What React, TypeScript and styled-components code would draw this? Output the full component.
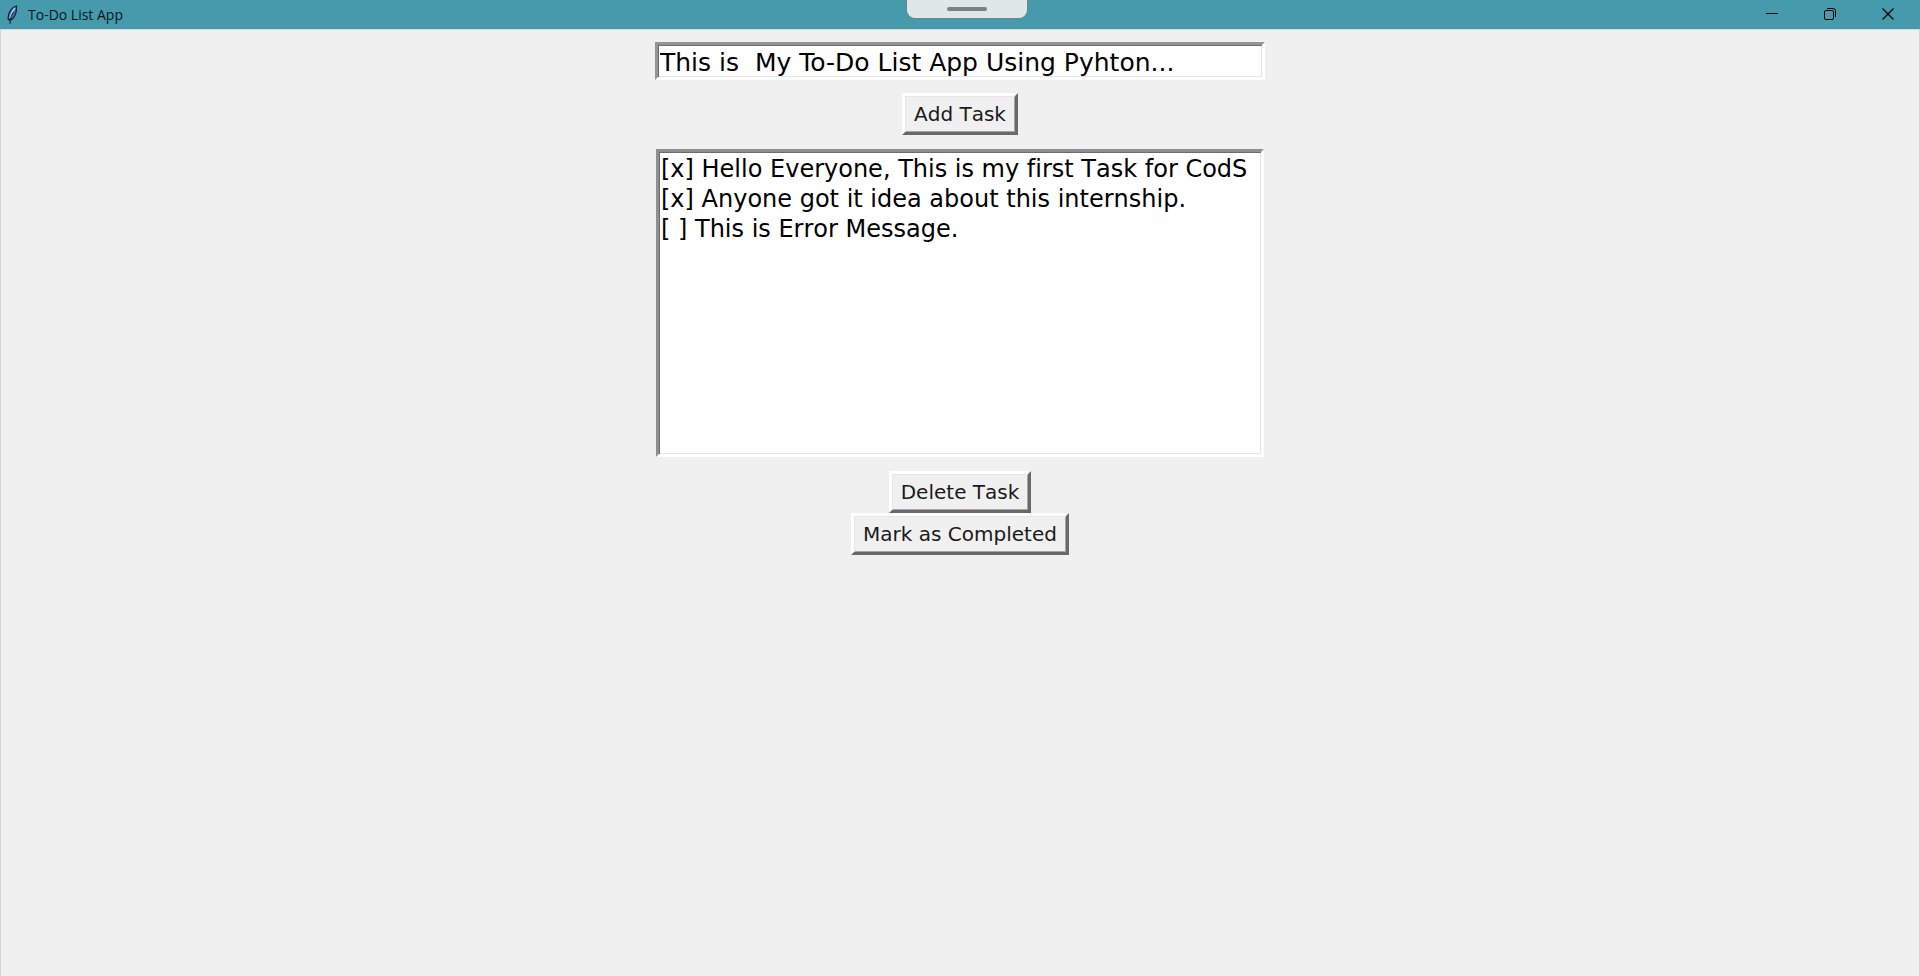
import React, { useState } from "react";
import styled, { createGlobalStyle } from "styled-components";

const GlobalStyle = createGlobalStyle`
  *, *::before, *::after { box-sizing: border-box; }
  body { margin: 0; background: #f0f0f0; }
`;

const appFont = `Verdana, "DejaVu Sans", sans-serif`;

const Window = styled.div`
  min-height: 100vh;
  display: flex;
  flex-direction: column;
  background: #f0f0f0;
  font-family: ${appFont};
`;

const TitleBar = styled.header`
  position: relative;
  height: 29px;
  display: flex;
  align-items: center;
  justify-content: space-between;
  background: #459aac;
`;

const TitleGroup = styled.div`
  display: flex;
  align-items: center;
  gap: 10px;
  padding-left: 6px;
`;

const Title = styled.h1`
  margin: 0;
  font: 400 14px/18px "Segoe UI", "Open Sans", sans-serif;
  color: #08161a;
`;

const WindowControls = styled.div`
  display: flex;
  height: 100%;
  padding-right: 3px;
`;

const ControlButton = styled.button`
  width: 58px;
  padding: 0 0 2px;
  border: 0;
  background: transparent;
  display: flex;
  align-items: center;
  justify-content: center;
`;

const PullTab = styled.div`
  position: absolute;
  top: 0;
  left: 50%;
  width: 122px;
  height: 19px;
  margin-left: -54px;
  border: 1px solid #6f8488;
  border-top: 0;
  border-radius: 0 0 9px 9px;
  background: #e0e7e9;
  display: flex;
  justify-content: center;
  padding-top: 7px;
`;

const Grip = styled.span`
  width: 40px;
  height: 4px;
  border-radius: 2px;
  background: #7b8080;
`;

const Content = styled.main`
  flex: 1;
  display: flex;
  flex-direction: column;
  align-items: center;
  padding: 12px 10px;
  border: 1px solid #d6d6d6;
  border-bottom: 0;
`;

const TaskInput = styled.input`
  width: 610px;
  max-width: 100%;
  height: 38px;
  padding: 2px 2px 0;
  border: 3px solid;
  border-color: #949494 #ffffff #ffffff #949494;
  border-radius: 0;
  outline: 0;
  background: #ffffff;
  box-shadow: inset 1px 1px #6c6c6c, inset -1px -1px #e6e6e6;
  font: 25px/30px ${appFont};
  color: #000000;
`;

const TaskList = styled.ul`
  width: 608px;
  max-width: 100%;
  height: 308px;
  margin: 14px 0;
  padding: 2px;
  border: 3px solid;
  border-color: #8f8f8f #ffffff #ffffff #8f8f8f;
  background: #ffffff;
  box-shadow: inset 1px 1px #6c6c6c, inset -1px -1px #e6e6e6;
  list-style: none;
  overflow: hidden;
`;

const TaskItem = styled.li`
  font-size: 24px;
  line-height: 30px;
  font-kerning: none;
  font-variant-ligatures: none;
  white-space: pre;
  overflow: hidden;
  color: #000000;
`;

const ActionButton = styled.button<{ $spaced?: boolean }>`
  height: 42px;
  margin-top: ${(p) => (p.$spaced ? "13px" : "0")};
  padding: 0 9px;
  border: 3px solid;
  border-color: #ffffff #696969 #696969 #ffffff;
  border-radius: 0;
  background: #f0f0f0;
  box-shadow: inset 1px 1px #e6e6e6, inset -1px -1px #a4a4a4;
  font: 20px/26px ${appFont};
  font-kerning: none;
  color: #1a1a1a;
`;

const FeatherIcon = () => (
  <svg width="12" height="20" viewBox="0 0 12 20" aria-hidden="true">
    <path d="M10.5 1C6 2 2 7 2 14l2 1.500c4-2 7-7 6.500-14.500z" fill="#3c70b4" stroke="#14202c" strokeWidth="1.200" />
    <path d="M9 3C6 6 5 9 4 13" fill="none" stroke="#b4d2ee" strokeWidth="1.500" />
    <path d="M7.500 7C5 11 4 14 4 19" fill="none" stroke="#14202c" strokeWidth="1" />
  </svg>
);

const MinimizeIcon = () => (
  <svg width="12" height="12" viewBox="0 0 12 12" aria-hidden="true">
    <path d="M0 5.500h12" stroke="#000" />
  </svg>
);

const RestoreIcon = () => (
  <svg width="12" height="12" viewBox="0 0 12 12" fill="none" stroke="#000" aria-hidden="true">
    <rect x="0.500" y="2.500" width="9" height="9" rx="1.500" />
    <path d="M3 .5h6a2.500 2.500 0 0 1 2.500 2.500v6" />
  </svg>
);

const CloseIcon = () => (
  <svg width="12" height="12" viewBox="0 0 12 12" aria-hidden="true">
    <path d="M.5.5l11 11M11.500.5l-11 11" stroke="#000" strokeWidth="1.200" />
  </svg>
);

interface Task {
  text: string;
  done: boolean;
}

const initialTasks: Task[] = [
  { text: "Hello Everyone, This is my first Task for CodS", done: true },
  { text: "Anyone got it idea about this internship.", done: true },
  { text: "This is Error Message.", done: false },
];

export default function App() {
  const [draft, setDraft] = useState("This is  My To-Do List App Using Pyhton...");
  const [tasks, setTasks] = useState(initialTasks);
  const [selected, setSelected] = useState(-1);

  const addTask = () => {
    if (!draft.trim()) return;
    setTasks([...tasks, { text: draft, done: false }]);
    setDraft("");
  };
  const deleteTask = () => {
    setTasks(tasks.filter((_, i) => i !== selected));
    setSelected(-1);
  };
  const completeTask = () =>
    setTasks(tasks.map((t, i) => (i === selected ? { ...t, done: true } : t)));

  return (
    <Window>
      <GlobalStyle />
      <TitleBar>
        <TitleGroup>
          <FeatherIcon />
          <Title>To-Do List App</Title>
        </TitleGroup>
        <PullTab>
          <Grip />
        </PullTab>
        <WindowControls>
          <ControlButton aria-label="Minimize"><MinimizeIcon /></ControlButton>
          <ControlButton aria-label="Restore"><RestoreIcon /></ControlButton>
          <ControlButton aria-label="Close"><CloseIcon /></ControlButton>
        </WindowControls>
      </TitleBar>
      <Content>
        <TaskInput aria-label="New task" value={draft} onChange={(e) => setDraft(e.target.value)} />
        <ActionButton $spaced onClick={addTask}>Add Task</ActionButton>
        <TaskList role="listbox" aria-label="Tasks">
          {tasks.map((task, i) => (
            <TaskItem key={i} role="option" aria-selected={i === selected} onClick={() => setSelected(i)}>
              {`[${task.done ? "x" : " "}] ${task.text}`}
            </TaskItem>
          ))}
        </TaskList>
        <ActionButton onClick={deleteTask}>Delete Task</ActionButton>
        <ActionButton onClick={completeTask}>Mark as Completed</ActionButton>
      </Content>
    </Window>
  );
}
